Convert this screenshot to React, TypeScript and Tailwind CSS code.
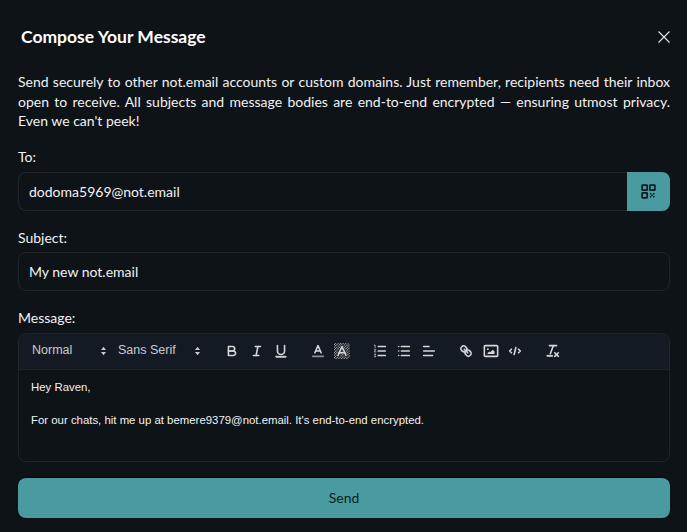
const Icon = ({ children }: { children: React.ReactNode }) => (
  <button className="flex h-6 w-[24.5px] shrink-0 items-center justify-center">
    <svg
      viewBox="0 0 18 18"
      className="h-4 w-4 fill-none stroke-[#d4d6d8] stroke-[1.8]"
      strokeLinecap="round"
      strokeLinejoin="round"
    >
      {children}
    </svg>
  </button>
);

const Arrows = () => (
  <svg viewBox="0 0 8 14" className="h-[10px] w-[7px] fill-[#c8cacc]">
    <polygon points="4,1 7.5,5.5 0.5,5.5" />
    <polygon points="4,13 7.5,8.5 0.5,8.5" />
  </svg>
);

const Picker = ({ label, width }: { label: string; width: string }) => (
  <div className={`flex items-center justify-between text-[12.5px] text-[#c8cacc] ${width}`}>
    <span className="-mt-[2px]">{label}</span>
    <Arrows />
  </div>
);

const App = () => {
  return (
    <div className="flex h-[532px] w-[687px] flex-col overflow-hidden bg-[#0e1318] pl-[18px] pr-[17px] font-['Lato',sans-serif] text-[#f1f2f3]">
      {/* Header */}
      <div className="flex h-[72px] shrink-0 items-center justify-between pl-[3px] pt-[1px]">
        <h2 className="text-[17.5px] font-bold leading-none text-white">Compose Your Message</h2>
        <svg viewBox="0 0 14 14" className="-mr-[1px] h-[14px] w-[14px] stroke-[#e5e7eb] stroke-[1.1]">
          <line x1="1.5" y1="1.5" x2="12.5" y2="12.5" />
          <line x1="12.5" y1="1.5" x2="1.5" y2="12.5" />
        </svg>
      </div>

      <p className="text-justify text-[14px] leading-[19.6px]">
        Send securely to other not.email accounts or custom domains. Just remember, recipients need
        their inbox open to receive. All subjects and message bodies are end-to-end encrypted —
        ensuring utmost privacy. Even we can't peek!
      </p>

      {/* To */}
      <label className="mt-[16.2px] text-[14px] leading-[20px]">To:</label>
      <div className="mt-[5px] flex h-[39px] shrink-0">
        <input
          readOnly
          value="dodoma5969@not.email"
          className="min-w-0 flex-1 rounded-l-lg border border-r-0 border-[#1f252b] bg-transparent px-[10px] text-[14px] text-[#f1f2f3] outline-none"
        />
        <button className="flex w-[43px] items-center justify-center rounded-r-lg bg-[#4a9ba0]">
          <svg viewBox="0 0 16 16" className="h-[15px] w-[15px] fill-none stroke-[#0b1c20] stroke-[1.8]">
            <rect x="1.2" y="1.2" width="5.4" height="5.4" rx="0.6" />
            <rect x="9.4" y="1.2" width="5.4" height="5.4" rx="0.6" />
            <rect x="1.2" y="9.4" width="5.4" height="5.4" rx="0.6" />
            <path
              d="M9.5 9.5h1.6v1.6H9.5zM12.8 9.5h1.6v1.6h-1.6zM11.1 11.1h1.7v1.7h-1.7zM9.5 12.8h1.6v1.6H9.5zM12.8 12.8h1.6v1.6h-1.6z"
              className="fill-[#0b1c20] stroke-none"
            />
          </svg>
        </button>
      </div>

      {/* Subject */}
      <label className="mt-[17px] text-[14px] leading-[20px]">Subject:</label>
      <input
        readOnly
        value="My new not.email"
        className="mt-1 h-[39px] shrink-0 rounded-lg border border-[#1f252b] bg-transparent px-[10px] text-[14px] text-[#f1f2f3] outline-none"
      />

      {/* Message */}
      <label className="mt-[17px] text-[14px] leading-[20px]">Message:</label>
      <div className="mt-[5px] flex h-[129px] shrink-0 flex-col overflow-hidden rounded-lg border border-[#1f252b] font-['Liberation_Sans',sans-serif]">
        <div className="flex h-9 shrink-0 items-center border-b border-[#1f252b] bg-[#141a23] pl-[13px]">
          <Picker label="Normal" width="w-[75px]" />
          <div className="w-[11px]" />
          <Picker label="Sans Serif" width="w-[83px]" />
          <div className="w-[19px]" />
          <Icon>
            <path d="M5,4H9.5A2.5,2.5,0,0,1,12,6.5v0A2.5,2.5,0,0,1,9.5,9H5V4Z" />
            <path d="M5,9h5.5A2.5,2.5,0,0,1,13,11.5v0A2.5,2.5,0,0,1,10.5,14H5V9Z" />
          </Icon>
          <Icon>
            <line x1="7" x2="13" y1="4" y2="4" />
            <line x1="5" x2="11" y1="14" y2="14" />
            <line x1="8" x2="10" y1="14" y2="4" />
          </Icon>
          <Icon>
            <path d="M5,3V9a4,4,0,0,0,4,4H9a4,4,0,0,0,4-4V3" />
            <rect height="1" rx="0.5" ry="0.5" width="12" x="3" y="15" className="fill-[#d4d6d8] stroke-1" />
          </Icon>
          <div className="w-[12px]" />
          <Icon>
            <line x1="3" x2="15" y1="15" y2="15" className="stroke-[#8b8f93]" />
            <polyline points="5.5 11 9 3 12.5 11" />
            <line x1="11.63" x2="6.38" y1="9" y2="9" />
          </Icon>
          <Icon>
            <path
              d="M0 2L2 0M0 5L5 0M0 8L8 0M0 11L11 0M0 14L14 0M0 17L17 0M2 18L18 2M5 18L18 5M8 18L18 8M11 18L18 11M14 18L18 14"
              className="stroke-[#b4b7ba] stroke-[1.2]"
              strokeLinecap="butt"
              strokeDasharray="1.2 0.8"
            />
            <polyline points="4.5 14 9 4 13.5 14" className="stroke-[#141a23] stroke-[3]" />
            <polyline points="4.5 14 9 4 13.5 14" />
            <line x1="12.2" x2="5.8" y1="11" y2="11" />
          </Icon>
          <div className="w-[13px]" />
          <Icon>
            <line x1="7" x2="15" y1="4" y2="4" />
            <line x1="7" x2="15" y1="9" y2="9" />
            <line x1="7" x2="15" y1="14" y2="14" />
            <path d="M2.5 2.6L3.5 2.2V5.5M2.6 7.5H4.2L2.6 10H4.4M2.6 12.5H4.3L3.3 13.9 4.3 15.5H2.6" className="stroke-[0.8]" />
          </Icon>
          <Icon>
            <line x1="6" x2="15" y1="4" y2="4" />
            <line x1="6" x2="15" y1="9" y2="9" />
            <line x1="6" x2="15" y1="14" y2="14" />
            <line x1="3" x2="3" y1="4" y2="4" />
            <line x1="3" x2="3" y1="9" y2="9" />
            <line x1="3" x2="3" y1="14" y2="14" />
          </Icon>
          <Icon>
            <line x1="3" x2="15" y1="9" y2="9" />
            <line x1="3" x2="13" y1="14" y2="14" />
            <line x1="3" x2="9" y1="4" y2="4" />
          </Icon>
          <div className="w-[13px]" />
          <Icon>
            <line x1="7" x2="11" y1="7" y2="11" />
            <path d="M8.9,4.577a3.476,3.476,0,0,1,.36,4.679A3.476,3.476,0,0,1,4.577,8.9C3.185,7.5,2.035,6.4,4.217,4.217S7.5,3.185,8.9,4.577Z" />
            <path d="M13.423,9.1a3.476,3.476,0,0,0-4.679-.36,3.476,3.476,0,0,0,.36,4.679c1.392,1.392,2.5,2.542,4.679.36S14.815,10.5,13.423,9.1Z" />
          </Icon>
          <Icon>
            <rect height="12" width="15" x="1.5" y="3" rx="1" />
            <circle cx="5.5" cy="7" r="1" className="fill-[#d4d6d8] stroke-0" />
            <polyline points="5 12.5 5 11.5 7 9.5 8 10.5 11 7.5 13 9.5 13 12.5 5 12.5" className="fill-[#d4d6d8] stroke-0" />
          </Icon>
          <Icon>
            <polyline points="5 7 3 9 5 11" />
            <polyline points="13 7 15 9 13 11" />
            <line x1="10" x2="8" y1="5" y2="13" />
          </Icon>
          <div className="w-[13px]" />
          <Icon>
            <line x1="5" x2="13" y1="3" y2="3" />
            <line x1="6" x2="9.35" y1="12" y2="3" />
            <line x1="11" x2="15" y1="11" y2="15" />
            <line x1="15" x2="11" y1="11" y2="15" />
            <rect height="1" rx="0.5" ry="0.5" width="7" x="2" y="14" className="fill-[#d4d6d8] stroke-1" />
          </Icon>
        </div>
        <div className="flex-1 px-3 py-[9px] text-[11.4px] leading-[16.5px] text-[#f1f2f3]">
          <p>Hey Raven,</p>
          <p>&nbsp;</p>
          <p>For our chats, hit me up at bemere9379@not.email. It's end-to-end encrypted.</p>
        </div>
      </div>

      <button className="mt-[15px] h-[41px] shrink-0 rounded-lg border-t border-t-black bg-[#4a9ba0] text-[14px] text-[#0e1b20]">
        Send
      </button>
    </div>
  );
};

export default App;
